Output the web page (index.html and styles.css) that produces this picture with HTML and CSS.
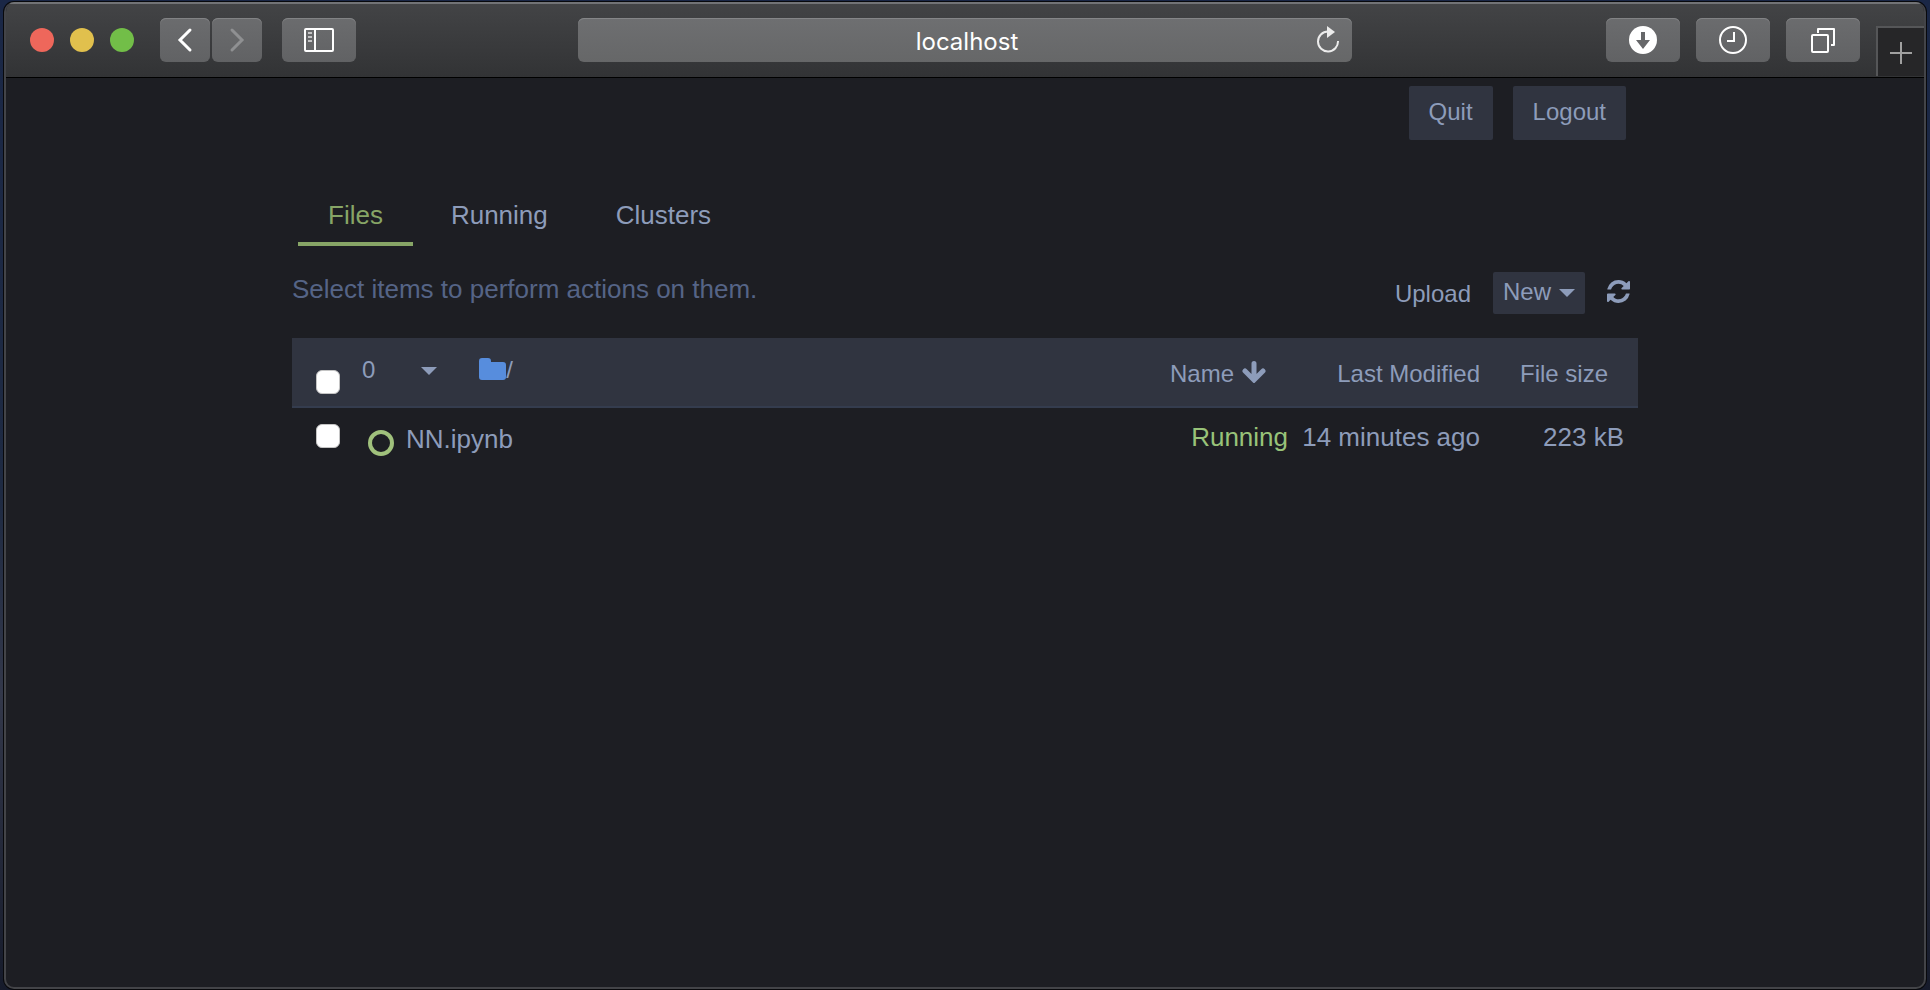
FILE: index.html
```html
<!DOCTYPE html>
<html lang="en">
<head>
<meta charset="utf-8">
<title>localhost</title>
<link rel="stylesheet" href="styles.css">
</head>
<body>
<div class="window">
  <header class="toolbar">
    <div class="lights">
      <button class="light light-close" aria-label="Close"></button>
      <button class="light light-min" aria-label="Minimize"></button>
      <button class="light light-full" aria-label="Full screen"></button>
    </div>
    <div class="nav">
      <button class="tool tool-nav" aria-label="Back"><svg width="50" height="44" viewBox="0 0 50 44"><path d="M30 12 20 22 30 32" fill="none" stroke="#fff" stroke-width="3" stroke-linecap="round"/></svg></button>
      <button class="tool tool-nav" aria-label="Forward"><svg width="50" height="44" viewBox="0 0 50 44"><path d="M20 12 30 22 20 32" fill="none" stroke="#8f9092" stroke-width="3" stroke-linecap="round"/></svg></button>
    </div>
    <button class="tool" aria-label="Sidebar"><svg width="30" height="24" viewBox="0 0 30 24"><rect x="1" y="1" width="28" height="22" rx="1" fill="none" stroke="#fff" stroke-width="2"/><path d="M11 1v22" stroke="#fff" stroke-width="2"/><path d="M4 5h4M4 9h4M4 13h4" stroke="#c4c4c5" stroke-width="2"/></svg></button>
    <div class="address">
      <input class="address-input" type="text" value="localhost" aria-label="Address">
      <button class="reload" aria-label="Reload"><svg width="24" height="28" viewBox="0 0 24 28"><path d="M11 5.500A10 10 0 1 0 21 15" fill="none" stroke="#ececec" stroke-width="2"/><path d="M10 0 18 6 10 12z" fill="#ececec"/></svg></button>
    </div>
    <div class="actions">
      <button class="tool" aria-label="Downloads"><svg width="28" height="28" viewBox="0 0 28 28"><circle cx="14" cy="14" r="14" fill="#fff"/><path d="M12 6h4v8h5l-7 9-7-9h5z" fill="#666769"/></svg></button>
      <button class="tool" aria-label="History"><svg width="28" height="28" viewBox="0 0 28 28"><circle cx="14" cy="14" r="13" fill="none" stroke="#fff" stroke-width="2"/><path d="M15 6v9H8" fill="none" stroke="#fff" stroke-width="2"/></svg></button>
      <button class="tool" aria-label="Show tabs"><svg width="24" height="26" viewBox="0 0 24 26"><rect x="1" y="8" width="16" height="17" rx="1" fill="none" stroke="#fff" stroke-width="2"/><path d="M7 6V2h16v16h-3" fill="none" stroke="#fff" stroke-width="2" stroke-linejoin="round"/></svg></button>
    </div>
    <button class="new-tab" aria-label="New tab"><svg width="22" height="22" viewBox="0 0 22 22"><path d="M11 0v22M0 11h22" stroke="#a0a0a0" stroke-width="2"/></svg></button>
  </header>

  <main class="page">
    <div class="session">
      <button class="btn">Quit</button>
      <button class="btn">Logout</button>
    </div>
    <nav class="tabs">
      <a class="tab tab-active" href="#files">Files</a>
      <a class="tab" href="#running">Running</a>
      <a class="tab" href="#clusters">Clusters</a>
    </nav>
    <div class="controls">
      <p class="hint">Select items to perform actions on them.</p>
      <div class="control-buttons">
        <button class="upload">Upload</button>
        <button class="new">New<span class="caret"></span></button>
        <button class="refresh" aria-label="Refresh"><svg width="23" height="23" viewBox="0 0 1536 1536"><path fill="#8d9cba" d="M1511 928q0 5-1 7-64 268-268 434.500T764 1536q-146 0-282.500-55T238 1324l-129 129q-19 19-45 19t-45-19-19-45V960q0-26 19-45t45-19h448q26 0 45 19t19 45-19 45l-137 137q71 66 161 102t187 36q134 0 250-65t186-179q11-17 53-117 8-23 30-23h192q13 0 22.500 9.500t9.500 22.500zm25-800v448q0 26-19 45t-45 19h-448q-26 0-45-19t-19-45 19-45l138-138Q969 256 768 256q-134 0-250 65T332 500q-11 17-53 117-8 23-30 23H50q-13 0-22.500-9.500T18 608v-7q65-268 270-434.500T768 0q146 0 284 55.500T1297 212l130-129q19-19 45-19t45 19 19 45z"/></svg></button>
      </div>
    </div>
    <table class="files">
      <thead>
        <tr>
          <th class="select-cell"><input class="check check-all" type="checkbox" aria-label="Select all"></th>
          <th class="path-cell">
            <div class="path">
              <button class="count">0<span class="caret"></span></button>
              <a class="crumb" href="#root" aria-label="Root folder"><svg width="27" height="22" viewBox="0 0 27 22"><path d="M0 3Q0 0 3 0H9Q12 0 12 3V4H24Q27 4 27 7V19Q27 22 24 22H3Q0 22 0 19Z" fill="#578ddd"/></svg>/</a>
            </div>
          </th>
          <th class="name-cell"><button class="sort">Name<svg class="sort-arrow" width="24" height="22" viewBox="0 0 24 22"><path d="M12 2.500V18M3 10l9 9 9-9" fill="none" stroke="#8d9cba" stroke-width="5" stroke-linecap="round"/></svg></button></th>
          <th class="modified-cell"><button class="sort">Last Modified</button></th>
          <th class="size-cell"><button class="sort">File size</button></th>
        </tr>
      </thead>
      <tbody>
        <tr>
          <td class="select-cell"><input class="check" type="checkbox" aria-label="Select NN.ipynb"></td>
          <td class="file-cell"><a class="file" href="#nn"><span class="ring"></span>NN.ipynb</a></td>
          <td class="status-cell">Running</td>
          <td class="modified-cell">14 minutes ago</td>
          <td class="size-cell">223 kB</td>
        </tr>
      </tbody>
    </table>
  </main>
</div>
</body>
</html>
```
FILE: styles.css
```css
* { box-sizing: border-box; }

body {
  margin: 0;
  min-height: 100vh;
  padding: 2px 4px 1px;
  display: flex;
  background: linear-gradient(#1a2746, #1e2a42 50%, #33384a 70%, #161b2b);
  color: #8d9cba;
  font-family: "Liberation Sans", Arial, sans-serif;
  font-size: 26px;
  line-height: 32px;
}

button {
  margin: 0;
  padding: 0;
  border: 0;
  background: none;
  color: inherit;
  font: inherit;
}

a { color: inherit; text-decoration: none; }
svg { display: block; }

.window {
  flex: 1;
  min-width: 0;
  overflow: hidden;
  border: 2px solid #434448;
  border-top: 0;
  border-radius: 10px;
  background: #1d1e23;
  box-shadow: 0 0 0 1px #08090c;
}

.toolbar {
  display: flex;
  align-items: flex-start;
  height: 76px;
  padding: 16px 0 0 24px;
  border-bottom: 1px solid #000;
  background: linear-gradient(#434446, #323335);
  box-shadow: inset 0 2px 0 #727376;
}

.lights { display: flex; gap: 16px; padding: 10px 0; }
.light { width: 24px; height: 24px; border-radius: 50%; }
.light-close { background: #ee675b; }
.light-min { background: #e1c04d; }
.light-full { background: #72be48; }

.nav { display: flex; gap: 2px; margin: 0 20px 0 26px; }

.tool {
  display: flex;
  align-items: center;
  justify-content: center;
  width: 74px;
  height: 44px;
  border-radius: 6px;
  background: linear-gradient(#6b6c6e, #616264);
  box-shadow: inset 0 1px 0 #828385;
}
.tool-nav { width: 50px; }

.address {
  flex: 1;
  display: flex;
  align-items: center;
  height: 44px;
  margin: 0 254px 0 222px;
  padding: 0 11px;
  border-radius: 6px;
  background: linear-gradient(#6e6f71, #666768);
  box-shadow: inset 0 1px 0 #858688;
}
.address-input {
  flex: 1;
  min-width: 0;
  padding: 4px 0 0 28px;
  border: 0;
  background: none;
  color: #fff;
  font: 24px/28px Inter, sans-serif;
  text-align: center;
}

.actions { display: flex; gap: 16px; margin-right: 16px; }

.new-tab {
  display: flex;
  align-items: center;
  justify-content: center;
  width: 48px;
  height: 50px;
  margin-top: 8px;
  padding-top: 2px;
  border: solid #555658;
  border-width: 2px 0 0 2px;
  background: #262628;
}

.page { max-width: 1346px; margin: 0 auto; padding-top: 8px; }

.session { display: flex; justify-content: flex-end; gap: 20px; padding-right: 12px; }
.btn {
  height: 54px;
  padding: 0 20px 2px;
  border-radius: 2px;
  background: #303440;
  font-size: 24px;
}

.tabs { display: flex; gap: 8px; padding: 54px 6px 0; }
.tab { padding: 5px 30px 11px; border-bottom: 4px solid transparent; }
.tab-active { border-color: #87a566; color: #87a566; }

.controls { display: flex; justify-content: space-between; align-items: flex-start; height: 92px; padding-top: 26px; }
.hint { margin: 1px 0 0; color: #556486; }
.control-buttons { display: flex; gap: 22px; padding-right: 8px; font-size: 24px; }
.upload { height: 42px; padding-top: 2px; }
.new {
  display: flex;
  align-items: center;
  gap: 8px;
  height: 42px;
  padding: 0 10px 2px;
  border-radius: 2px;
  background: #303440;
}
.caret {
  margin-top: 2px;
  border: solid transparent;
  border-width: 8px 8px 0;
  border-top-color: #8d9cba;
}
.refresh { height: 38px; }

.files { width: 100%; border-collapse: collapse; }
.files th, .files td { padding: 0; vertical-align: top; text-align: left; font-weight: 400; }
.files thead tr { height: 69px; border-bottom: 2px solid #343c4e; background: #303440; font-size: 24px; }

.select-cell { width: 70px; }
.check {
  appearance: none;
  display: block;
  width: 24px;
  height: 24px;
  margin: 16px 0 0 24px;
  border: 1px solid #c4c4c4;
  border-radius: 6px;
  background: #fff;
}
.check-all { margin-top: 32px; }

.path { display: flex; gap: 42px; padding-top: 16px; }
.count { display: flex; align-items: center; gap: 46px; }
.crumb { display: flex; align-items: center; }
.crumb svg { margin-bottom: 2px; }

.sort { display: inline-flex; align-items: center; gap: 8px; padding-top: 20px; }
.sort-arrow { margin-bottom: 4px; }
.files .name-cell { width: 180px; padding-left: 62px; }
.files .status-cell { padding-top: 13px; text-align: right; color: #98c379; }
.files .modified-cell { width: 192px; text-align: right; }
.files .size-cell { width: 158px; padding-right: 30px; text-align: right; }
.files tbody .modified-cell, .files tbody .size-cell { padding-top: 13px; }
.files tbody .size-cell { padding-right: 14px; }

.file { display: flex; gap: 12px; padding-top: 15px; }
.ring {
  width: 26px;
  height: 26px;
  margin: 7px 0 0 6px;
  border: 4px solid #a0c17c;
  border-radius: 50%;
}
```
